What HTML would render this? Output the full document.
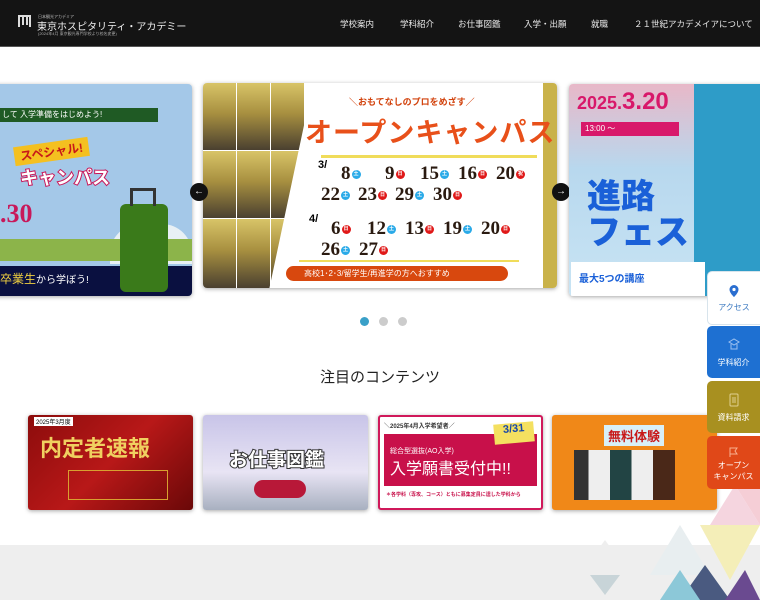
<!DOCTYPE html>
<html><head><meta charset="utf-8"><style>
*{margin:0;padding:0;box-sizing:border-box}
body{width:760px;height:600px;overflow:hidden;background:#fff;font-family:"Liberation Sans","Noto Sans CJK JP",sans-serif;position:relative}
.hd{position:absolute;left:0;top:0;width:760px;height:47px;background:#141414;border-bottom:1px solid #555}
.nav{position:absolute;top:18px;color:#e8e8e8;font-size:8.5px;white-space:nowrap}
.abs{position:absolute}
.slide{position:absolute;border-radius:4px;overflow:hidden;box-shadow:0 1px 4px rgba(0,0,0,.35)}
.arrow{position:absolute;width:18px;height:18px;border-radius:50%;background:#111;color:#fff;font-size:10px;line-height:18px;text-align:center}
.dot{position:absolute;top:317px;width:9px;height:9px;border-radius:50%;background:#ccc}
.card{position:absolute;top:415px;height:95px;width:165px;border-radius:3px;overflow:hidden;box-shadow:0 1px 4px rgba(0,0,0,.35)}
.side{position:absolute;left:707px;width:53px;color:#fff;font-size:8px;text-align:center;border-radius:5px 0 0 5px}
.d{position:absolute;font-family:"Liberation Serif",serif;font-weight:bold;font-size:19px;color:#2a1a10}
.b{display:inline-block;width:9px;height:9px;border-radius:50%;font-size:5px;line-height:9px;text-align:center;color:#fff;vertical-align:middle;margin-left:1px}
.r{background:#e01919}.c{background:#2aaae8}
.ph{position:absolute;width:33px;height:67px;background:linear-gradient(180deg,#d8c468 0%,#a89040 45%,#4a4030 100%)}
</style></head><body>
<div class="hd">
 <div class="abs" style="left:18px;top:15px;width:13px;height:12px;border:2px solid #ddd;border-bottom:none"></div>
 <div class="abs" style="left:22px;top:15px;width:2px;height:10px;background:#ddd"></div>
 <div class="abs" style="left:26px;top:15px;width:2px;height:10px;background:#ddd"></div>
 <div class="abs" style="left:38px;top:14px;color:#bbb;font-size:4px">日本観光アカデミア</div>
 <div class="abs" style="left:37px;top:18px;color:#eee;font-size:10px;white-space:nowrap">東京ホスピタリティ・アカデミー</div>
 <div class="abs" style="left:38px;top:31px;color:#aaa;font-size:4px;white-space:nowrap">(2024年4月 東京観光専門学校より校名変更)</div>
 <span class="nav" style="left:340px">学校案内</span>
 <span class="nav" style="left:400px">学科紹介</span>
 <span class="nav" style="left:458px">お仕事図鑑</span>
 <span class="nav" style="left:524px">入学・出願</span>
 <span class="nav" style="left:591px">就職</span>
 <span class="nav" style="left:634px">２１世紀アカデメイアについて</span>
</div>

<!-- left slide -->
<div class="slide" style="left:-10px;top:84px;width:202px;height:212px;background:#a4c8e8">
 <div class="abs" style="left:0;top:24px;width:168px;height:14px;background:#1f5a24;color:#fff;font-size:8px;line-height:14px;padding-left:12px">して 入学準備をはじめよう!</div>
 <div class="abs" style="left:30px;top:80px;font-size:18px;font-weight:bold;color:#fff;-webkit-text-stroke:2px #c8185a;paint-order:stroke">キャンパス</div>
 <div class="abs" style="left:24px;top:58px;background:#f4c020;color:#c81818;font-size:12px;font-weight:bold;padding:1px 6px;transform:rotate(-8deg)">スペシャル!</div>
 <div class="abs" style="left:10px;top:115px;color:#c8185a;font-size:26px;font-weight:bold;font-family:'Liberation Serif',serif">.30</div>
 <div class="abs" style="left:120px;top:140px;width:82px;height:40px;background:#e8f0f4;border-radius:30px 30px 0 0"></div>
 <div class="abs" style="left:0;top:155px;width:202px;height:22px;background:#8cb44a"></div>
 <div class="abs" style="left:0;top:182px;width:202px;height:30px;background:#0a1040;color:#f0d040;font-size:12px;line-height:26px;padding-left:10px">卒業生<span style="color:#fff;font-size:10px">から学ぼう!</span></div>
 <div class="abs" style="left:130px;top:120px;width:48px;height:88px;background:#3a7a1a;border-radius:6px"></div>
 <div class="abs" style="left:140px;top:104px;width:26px;height:18px;border:3px solid #333;border-bottom:none"></div>
</div>

<!-- center slide -->
<div class="slide" style="left:203px;top:83px;width:354px;height:205px;background:#fff">
 <div class="ph" style="left:0;top:0"></div><div class="ph" style="left:34px;top:0"></div><div class="ph" style="left:68px;top:0"></div>
 <div class="ph" style="left:0;top:68px"></div><div class="ph" style="left:34px;top:68px"></div><div class="ph" style="left:68px;top:68px"></div>
 <div class="ph" style="left:0;top:136px;height:69px"></div><div class="ph" style="left:34px;top:136px;height:69px"></div><div class="ph" style="left:68px;top:136px;height:69px"></div>
 <div class="abs" style="left:60px;top:0;width:90px;height:205px;background:#fff;transform:skewX(-12deg);transform-origin:top left;left:110px"></div>
 <div class="abs" style="left:340px;top:0;width:14px;height:205px;background:#c9b24a"></div>
 <div class="abs" style="left:146px;top:12px;font-size:9px;color:#d2420c;font-weight:bold">＼おもてなしのプロをめざす／</div>
 <div class="abs" style="left:102px;top:28px;font-size:27px;color:#e8501a;font-weight:bold;letter-spacing:1px;white-space:nowrap">オープンキャンパス</div>
 <div class="abs" style="left:118px;top:72px;width:216px;height:3px;background:#f0dc5a"></div>
 <div class="abs" style="left:115px;top:76px;font-size:11px;font-weight:bold">3/</div>
 <div class="d" style="left:138px;top:80px">8<span class="b c">土</span></div>
 <div class="d" style="left:182px;top:80px">9<span class="b r">日</span></div>
 <div class="d" style="left:217px;top:80px">15<span class="b c">土</span></div>
 <div class="d" style="left:255px;top:80px">16<span class="b r">日</span></div>
 <div class="d" style="left:293px;top:80px">20<span class="b r">祝</span></div>
 <div class="d" style="left:118px;top:101px">22<span class="b c">土</span></div>
 <div class="d" style="left:155px;top:101px">23<span class="b r">日</span></div>
 <div class="d" style="left:192px;top:101px">29<span class="b c">土</span></div>
 <div class="d" style="left:230px;top:101px">30<span class="b r">日</span></div>
 <div class="abs" style="left:106px;top:130px;font-size:11px;font-weight:bold">4/</div>
 <div class="d" style="left:128px;top:135px">6<span class="b r">日</span></div>
 <div class="d" style="left:164px;top:135px">12<span class="b c">土</span></div>
 <div class="d" style="left:202px;top:135px">13<span class="b r">日</span></div>
 <div class="d" style="left:240px;top:135px">19<span class="b c">土</span></div>
 <div class="d" style="left:278px;top:135px">20<span class="b r">日</span></div>
 <div class="d" style="left:118px;top:156px">26<span class="b c">土</span></div>
 <div class="d" style="left:156px;top:156px">27<span class="b r">日</span></div>
 <div class="abs" style="left:96px;top:177px;width:220px;height:2px;background:#f0dc5a"></div>
 <div class="abs" style="left:83px;top:183px;width:222px;height:15px;border-radius:8px;background:#d8480e;color:#fff;font-size:8px;line-height:15px;padding-left:18px">高校1･2･3/留学生/再進学の方へおすすめ</div>
</div>
<div class="arrow" style="left:190px;top:183px">←</div>
<div class="arrow" style="left:552px;top:183px">→</div>

<!-- right slide -->
<div class="slide" style="left:569px;top:84px;width:200px;height:212px;background:linear-gradient(180deg,#e8b8c8 0%,#b8d8ee 40%,#c8e4f4 100%)">
 <div class="abs" style="left:125px;top:0;width:75px;height:212px;background:#2e9cc8"></div>
 <div class="abs" style="left:8px;top:4px;color:#d8186a;font-size:18px;font-weight:bold;white-space:nowrap">2025.<span style="font-size:24px">3.20</span></div>
 <div class="abs" style="left:12px;top:38px;width:98px;height:14px;background:#d8186a;color:#fff;font-size:8px;line-height:14px;padding-left:4px">13:00 ～</div>
 <div class="abs" style="left:18px;top:95px;color:#1a60d8;font-size:34px;font-weight:900;line-height:36px">進路<br>フェス</div>
 <div class="abs" style="left:2px;top:178px;width:134px;height:34px;background:#fff"></div>
 <div class="abs" style="left:10px;top:186px;color:#1a60d8;font-size:10px;font-weight:bold">最大5つの講座</div>
</div>

<div class="dot" style="left:360px;background:#3aa0c8"></div>
<div class="dot" style="left:379px"></div>
<div class="dot" style="left:398px"></div>

<div class="abs" style="left:0;top:366px;width:760px;text-align:center;font-size:15px;color:#222">注目のコンテンツ</div>

<div class="card" style="left:28px;background:linear-gradient(135deg,#8c0c0c,#b81818 50%,#6a0808)">
 <div class="abs" style="left:6px;top:2px;background:#fff;color:#000;font-size:6px;padding:0 2px">2025年3月度</div>
 <div class="abs" style="left:12px;top:16px;color:#f0d060;font-size:22px;font-weight:bold;white-space:nowrap">内定者速報</div>
 <div class="abs" style="left:40px;top:55px;width:100px;height:30px;border:1px solid #d8a030"></div>
</div>
<div class="card" style="left:203px;background:linear-gradient(180deg,#c8c4e8,#e8e4f4 60%,#a8b0c0)">
 <div class="abs" style="left:26px;top:30px;color:#fff;font-size:19px;font-weight:bold;-webkit-text-stroke:2px #333;paint-order:stroke;white-space:nowrap">お仕事図鑑</div>
 <div class="abs" style="left:51px;top:65px;width:52px;height:18px;border-radius:9px;background:#b81838"></div>
</div>
<div class="card" style="left:378px;background:#fff;border:2px solid #d0185a">
 <div class="abs" style="left:4px;top:4px;font-size:6px;font-weight:bold;color:#333">＼2025年4月入学希望者／</div>
 <div class="abs" style="left:4px;top:17px;width:153px;height:52px;background:#c8104a;color:#fff;font-size:16px;line-height:18px;padding:6px 6px;white-space:nowrap"><span style="font-size:7px">総合型選抜(AO入学)</span><br>入学願書受付中!!</div>
 <div class="abs" style="left:114px;top:6px;width:40px;height:20px;background:#f4e060;color:#1848a8;font-size:11px;font-weight:bold;text-align:center;transform:rotate(-5deg)">3/31</div>
 <div class="abs" style="left:6px;top:74px;font-size:5px;color:#c8104a;font-weight:bold">＊各学科（専攻、コース）ともに募集定員に達した学科から</div>
</div>
<div class="card" style="left:552px;background:#f08818">
 <div class="abs" style="left:52px;top:10px;background:#d8f0f8;color:#c81818;font-size:13px;font-weight:bold;padding:1px 4px">無料体験</div>
 <div class="abs" style="left:22px;top:35px;width:120px;height:50px;background:linear-gradient(90deg,#333 0 12%,#eee 12% 30%,#244 30% 48%,#eee 48% 66%,#4a2818 66% 84%,transparent 84%)"></div>
</div>

<div class="abs" style="left:0;top:545px;width:760px;height:55px;background:#eeeeee"></div>
<svg class="abs" style="left:560px;top:440px" width="200" height="160">
 <polygon points="175,45 200,5 200,85" fill="#f2c2cc" opacity=".8"/>
 <polygon points="150,85 175,45 200,85" fill="#f4d0dc" opacity=".9"/>
 <polygon points="140,85 200,85 170,140" fill="#f4eeb8"/>
 <polygon points="90,135 120,85 150,135" fill="#e8eef0"/>
 <polygon points="120,160 145,125 170,160" fill="#4a5a80"/>
 <polygon points="165,160 185,130 200,160" fill="#6a4a90"/>
 <polygon points="100,160 120,130 140,160" fill="#8cc8d8"/>
 <polygon points="20,135 45,100 70,135" fill="#eeeeee"/>
 <polygon points="30,135 45,155 60,135" fill="#c8d4d8"/>
</svg>

<div class="side" style="top:271px;height:54px;background:#fff;border:1px solid #d8e4ec;border-right:none;color:#3a78c0">
 <svg width="12" height="14" style="margin-top:12px" viewBox="0 0 12 14"><path d="M6 1a4.5 4.5 0 0 0-4.5 4.5C1.5 9 6 13 6 13s4.5-4 4.5-7.5A4.5 4.5 0 0 0 6 1z" fill="#2a6ed0"/><circle cx="6" cy="5.5" r="1.6" fill="#fff"/></svg>
 <div style="margin-top:2px">アクセス</div></div>
<div class="side" style="top:326px;height:52px;background:#1e70d2">
 <svg width="12" height="14" style="margin-top:12px" viewBox="0 0 12 14"><path d="M1 4l5-3 5 3-5 3zM3 6v5h6V6" fill="none" stroke="#9cc0f0" stroke-width="1"/></svg>
 <div style="margin-top:3px">学科紹介</div></div>
<div class="side" style="top:381px;height:52px;background:#a89020">
 <svg width="12" height="14" style="margin-top:12px" viewBox="0 0 12 14"><rect x="2" y="1" width="8" height="12" rx="1" fill="none" stroke="#e0d090"/><path d="M4 5h4M4 7h4M4 9h4" stroke="#e0d090"/></svg>
 <div style="margin-top:3px">資料請求</div></div>
<div class="side" style="top:436px;height:53px;background:#e04818">
 <svg width="12" height="12" style="margin-top:10px" viewBox="0 0 12 12"><path d="M2 11V2h7l-2 3 2 3H2" fill="none" stroke="#f8b090"/></svg>
 <div style="line-height:11px">オープン<br>キャンパス</div></div>
</body></html>
